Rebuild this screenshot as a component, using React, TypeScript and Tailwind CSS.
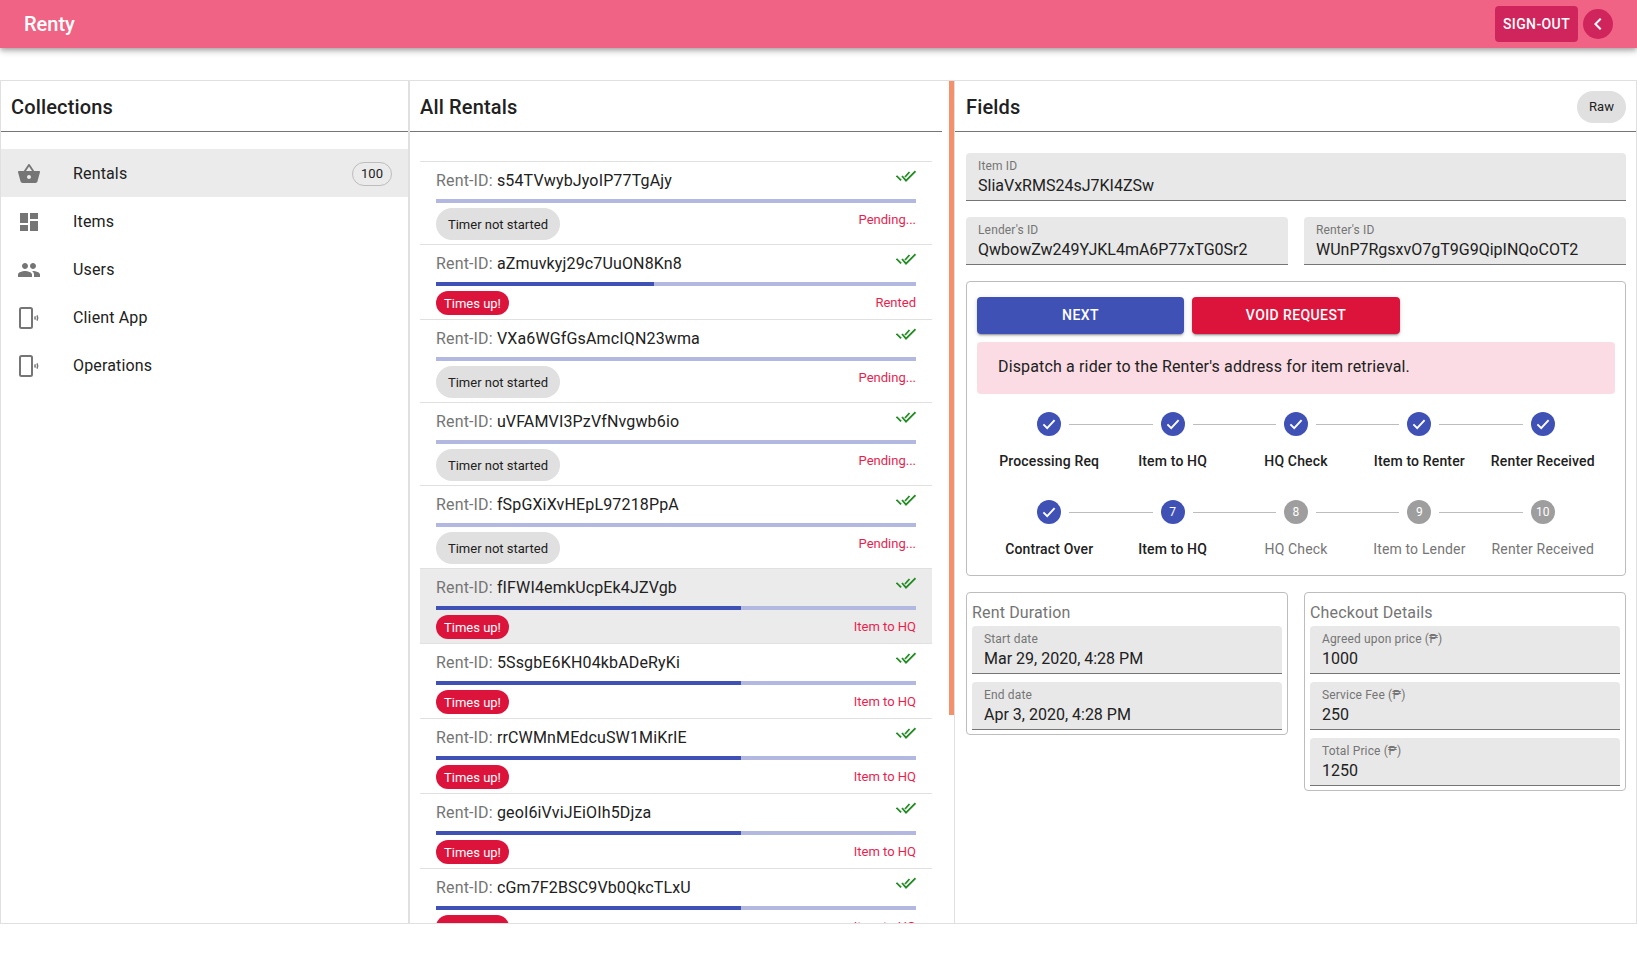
import { MdChevronLeft, MdDashboard, MdPeople, MdShoppingBasket } from "react-icons/md";

const DeviceIcon = () => (
  <svg width="24" height="24" viewBox="0 0 24 24" fill="none">
    <rect x="3" y="2" width="12" height="20" rx="1.5" stroke="#757575" strokeWidth="2" />
    <path d="M17.8 10.4c.4.9.4 2.3 0 3.2" stroke="#757575" strokeWidth="1.5" />
    <path d="M20 9.4c.8 1.5.8 3.7 0 5.2" stroke="#757575" strokeWidth="1.5" />
  </svg>
);

const DoneAll = () => (
  <svg width="20" height="12" viewBox="0 0 20 12" fill="none" stroke="#228b22" strokeWidth="1.8">
    <path d="M.5 5.8l4.6 4.6" />
    <path d="M6 6l4 4.6L19.5 1.2" />
    <path d="M9 7l4.5-5" />
  </svg>
);

const CheckMark = () => (
  <svg width="14" height="14" viewBox="0 0 14 14" fill="none" stroke="#fff" strokeWidth="1.9">
    <path d="M1.4 7.4l3.8 3.8 7.4-8" />
  </svg>
);

const menu = [
  { label: "Rentals", icon: <MdShoppingBasket size={24} color="#757575" />, count: 100, active: true },
  { label: "Items", icon: <MdDashboard size={24} color="#757575" /> },
  { label: "Users", icon: <MdPeople size={24} color="#757575" /> },
  { label: "Client App", icon: <DeviceIcon /> },
  { label: "Operations", icon: <DeviceIcon /> },
];

const rentals = [
  { id: "s54TVwybJyoIP77TgAjy", status: "Pending...", progress: 0, started: false },
  { id: "aZmuvkyj29c7UuON8Kn8", status: "Rented", progress: 45.4, started: true },
  { id: "VXa6WGfGsAmcIQN23wma", status: "Pending...", progress: 0, started: false },
  { id: "uVFAMVI3PzVfNvgwb6io", status: "Pending...", progress: 0, started: false },
  { id: "fSpGXiXvHEpL97218PpA", status: "Pending...", progress: 0, started: false },
  { id: "fIFWI4emkUcpEk4JZVgb", status: "Item to HQ", progress: 63.6, started: true, selected: true },
  { id: "5SsgbE6KH04kbADeRyKi", status: "Item to HQ", progress: 63.6, started: true },
  { id: "rrCWMnMEdcuSW1MiKrIE", status: "Item to HQ", progress: 63.6, started: true },
  { id: "geoI6iVviJEiOIh5Djza", status: "Item to HQ", progress: 63.6, started: true },
  { id: "cGm7F2BSC9Vb0QkcTLxU", status: "Item to HQ", progress: 63.6, started: true },
];

const stepsTop = ["Processing Req", "Item to HQ", "HQ Check", "Item to Renter", "Renter Received"];
const stepsBottom = ["Contract Over", "Item to HQ", "HQ Check", "Item to Lender", "Renter Received"];

const PanelTitle = ({ children }: any) => (
  <h2 className="text-[20px] leading-[26px] font-medium text-[#212121] tracking-[0.15px]">{children}</h2>
);

const Field = ({ label, value }: any) => (
  <div className="h-[48px] rounded-t-[4px] bg-[#e8e8e8] border-b border-[#757575] px-3 pt-[6px]">
    <div className="text-[12px] leading-[14px] text-[#757575] whitespace-nowrap">{label}</div>
    <div className="mt-px text-[16px] leading-[24px] tracking-normal text-[#212121] whitespace-nowrap">{value}</div>
  </div>
);

const Step = ({ n, label, state, first, last }: any) => {
  // state: done | current | todo
  return (
    <div className="text-center">
      <div className="flex items-center h-6">
        <span className={`flex-1 h-px ${first ? "bg-transparent" : "bg-[#bdbdbd]"}`} />
        <span
          className={`mx-2 w-6 h-6 rounded-full flex items-center justify-center text-[12px] text-white ${
            state === "todo" ? "bg-[#9e9e9e]" : "bg-[#3f51b5]"
          }`}
        >
          {state === "done" ? <CheckMark /> : n}
        </span>
        <span className={`flex-1 h-px ${last ? "bg-transparent" : "bg-[#bdbdbd]"}`} />
      </div>
      <div
        className={`mt-[15px] text-[14px] leading-[20px] whitespace-nowrap ${
          state === "todo" ? "text-[#757575]" : "font-medium text-[#212121]"
        }`}
      >
        {label}
      </div>
    </div>
  );
};

const App = () => {
  return (
    <div className="min-h-[956px] bg-white font-[Roboto,sans-serif] tracking-[0.15px]">
      <header className="relative z-10 h-12 bg-[#f06384] flex items-center justify-between pl-6 pr-6 shadow-[0_2px_4px_-1px_rgba(0,0,0,0.2),0_4px_5px_0_rgba(0,0,0,0.14),0_1px_10px_0_rgba(0,0,0,0.12)]">
        <div className="text-[20px] font-medium text-white tracking-normal">Renty</div>
        <div className="flex items-center gap-[5px]">
          <button className="h-9 w-[83px] rounded-[4px] bg-[#d0245c] text-white text-[14px] font-medium tracking-[0.4px]">
            SIGN-OUT
          </button>
          <button className="w-[30px] h-[30px] rounded-full bg-[#d0245c] flex items-center justify-center">
            <MdChevronLeft size={24} color="#fff" />
          </button>
        </div>
      </header>

      <main className="mt-8 h-[844px] flex border-y border-r border-[#e0e0e0] overflow-hidden">
        {/* collections */}
        <section className="w-[410px] shrink-0 border-l border-r-2 border-[#e0e0e0]">
          <div className="h-[51px] border-b border-[#757575] pl-[10px] pt-[13px]">
            <PanelTitle>Collections</PanelTitle>
          </div>
          <div className="pt-[17px]">
            {menu.map((m) => (
              <div
                key={m.label}
                className={`h-12 flex items-center pl-4 pr-4 pt-[2px] ${m.active ? "bg-[#ebebeb]" : ""}`}
              >
                <div className="w-14 shrink-0">{m.icon}</div>
                <div className="flex-1 text-[16px] text-[#212121]">{m.label}</div>
                {m.count && (
                  <div className="w-10 h-6 rounded-full border border-[#bdbdbd] flex items-center justify-center text-[13px] tracking-normal text-[#212121]">
                    {m.count}
                  </div>
                )}
              </div>
            ))}
          </div>
        </section>

        {/* rentals */}
        <section className="w-[545px] shrink-0 flex border-r border-[#e0e0e0]">
          <div className="w-[532px] shrink-0 overflow-hidden">
            <div className="h-[51px] border-b border-[#757575] pl-[10px] pt-[13px]">
              <PanelTitle>All Rentals</PanelTitle>
            </div>
            <div className="pt-[29px] pl-[10px] pr-[10px]">
              {rentals.map((r) => (
                <div
                  key={r.id}
                  className={`border-t border-[#e0e0e0] px-4 pb-1 ${r.selected ? "bg-[#ebebeb]" : ""}`}
                >
                  <div className="flex justify-between pt-[7px]">
                    <div className="text-[16px] leading-[24px] text-[#212121]">
                      <span className="text-[#757575]">Rent-ID:</span> {r.id}
                    </div>
                    <div className="pt-px">
                      <DoneAll />
                    </div>
                  </div>
                  <div className="h-1 mt-[6px] bg-[#b2b8e0]">
                    <div className="h-1 bg-[#3f51b5]" style={{ width: `${r.progress}%` }} />
                  </div>
                  <div className="flex justify-between items-start mt-[5px] tracking-normal">
                    {r.started ? (
                      <div className="h-6 px-[8px] w-[73px] rounded-full bg-[#dc143c] text-white text-[13px] leading-[26px] whitespace-nowrap">
                        Times up!
                      </div>
                    ) : (
                      <div className="h-8 w-[124px] rounded-full bg-[#e0e0e0] text-[#212121] text-[13px] leading-[34px] text-center whitespace-nowrap">
                        Timer not started
                      </div>
                    )}
                    <div className="mt-[2px] text-[13px] leading-[20px] text-[#e91e4f]">{r.status}</div>
                  </div>
                </div>
              ))}
            </div>
          </div>
          <div className="ml-[7px] w-[5px] h-[634px] bg-[#f4906a]" />
        </section>

        {/* fields */}
        <section className="flex-1 min-w-0">
          <div className="h-[51px] border-b border-[#757575] pl-[11px] pr-[10px] flex items-start justify-between">
            <div className="pt-[13px]">
              <PanelTitle>Fields</PanelTitle>
            </div>
            <button className="mt-[10px] w-[49px] h-8 rounded-full bg-[#e0e0e0] text-[13px] tracking-normal text-[#212121]">
              Raw
            </button>
          </div>
          <div className="pl-[11px] pr-[10px] pt-[21px]">
            <Field label="Item ID" value="SliaVxRMS24sJ7KI4ZSw" />
            <div className="grid grid-cols-2 gap-4 mt-4">
              <Field label="Lender's ID" value="QwbowZw249YJKL4mA6P77xTG0Sr2" />
              <Field label="Renter's ID" value="WUnP7RgsxvO7gT9G9QipINQoCOT2" />
            </div>

            <div className="mt-4 h-[295px] border border-[#bdbdbd] rounded-[4px] px-[10px] pt-[15px]">
              <div className="flex gap-2">
                <button className="w-[207px] h-[37px] rounded-[4px] bg-[#3f51b5] text-white text-[14px] font-medium tracking-[0.4px] shadow-[0_3px_1px_-2px_rgba(0,0,0,0.2),0_2px_2px_0_rgba(0,0,0,0.14),0_1px_5px_0_rgba(0,0,0,0.12)]">
                  NEXT
                </button>
                <button className="w-[208px] h-[37px] rounded-[4px] bg-[#dc143c] text-white text-[14px] font-medium tracking-[0.4px] shadow-[0_3px_1px_-2px_rgba(0,0,0,0.2),0_2px_2px_0_rgba(0,0,0,0.14),0_1px_5px_0_rgba(0,0,0,0.12)]">
                  VOID REQUEST
                </button>
              </div>
              <div className="mt-2 h-[52px] rounded-[4px] bg-[#fcdce4] pl-[21px] pt-[13px] text-[16px] leading-[24px] text-[#212121]">
                Dispatch a rider to the Renter's address for item retrieval.
              </div>
              <div className="px-[10.5px] pt-[18px]">
                <div className="grid grid-cols-5">
                  {stepsTop.map((s, i) => (
                    <Step key={s} label={s} n={i + 1} state="done" first={i === 0} last={i === 4} />
                  ))}
                </div>
                <div className="grid grid-cols-5 mt-[29px]">
                  {stepsBottom.map((s, i) => (
                    <Step
                      key={s}
                      label={s}
                      n={i + 6}
                      state={i === 0 ? "done" : i === 1 ? "current" : "todo"}
                      first={i === 0}
                      last={i === 4}
                    />
                  ))}
                </div>
              </div>
            </div>

            <div className="grid grid-cols-2 gap-4 mt-4 items-start">
              <div className="border border-[#bdbdbd] rounded-[4px] px-[5px] pt-[5px] pb-1">
                <div className="h-7 text-[16px] leading-[29px] text-[#757575]">Rent Duration</div>
                <div className="flex flex-col gap-2">
                  <Field label="Start date" value="Mar 29, 2020, 4:28 PM" />
                  <Field label="End date" value="Apr 3, 2020, 4:28 PM" />
                </div>
              </div>
              <div className="border border-[#bdbdbd] rounded-[4px] px-[5px] pt-[5px] pb-1">
                <div className="h-7 text-[16px] leading-[29px] text-[#757575]">Checkout Details</div>
                <div className="flex flex-col gap-2">
                  <Field label="Agreed upon price (₱)" value="1000" />
                  <Field label="Service Fee (₱)" value="250" />
                  <Field label="Total Price (₱)" value="1250" />
                </div>
              </div>
            </div>
          </div>
        </section>
      </main>
    </div>
  );
};

export default App;
